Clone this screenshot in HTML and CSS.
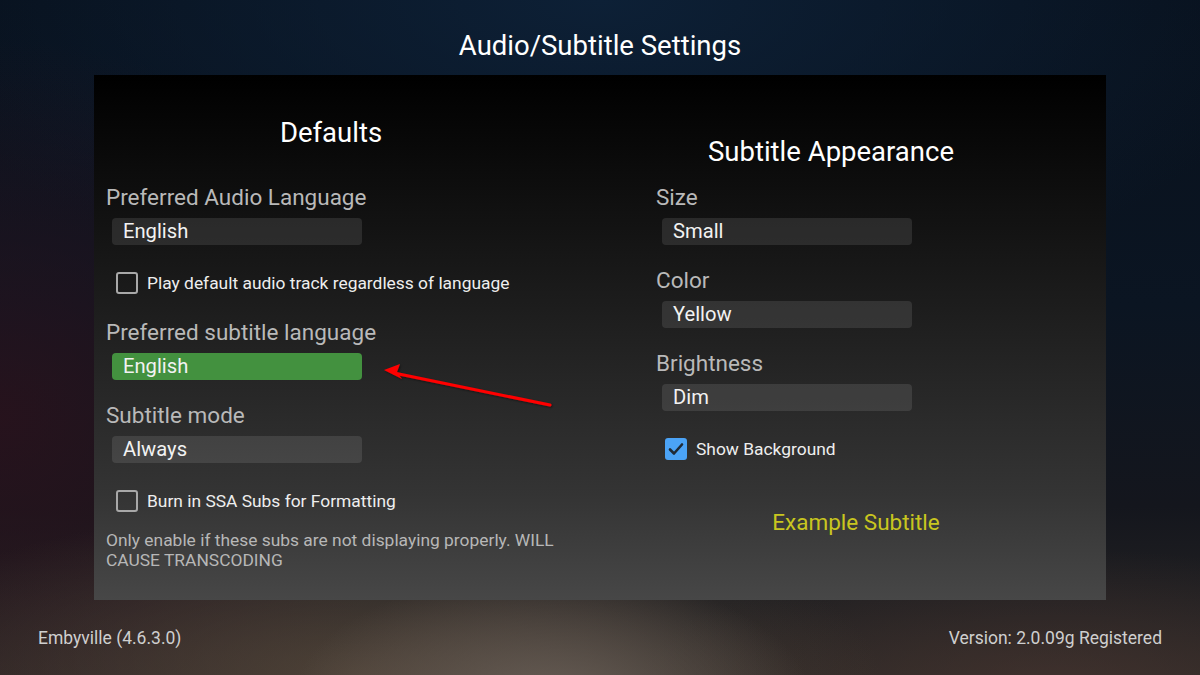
FILE: index.html
```html
<!DOCTYPE html>
<html>
	<head>
		<meta charset="UTF-8">
		<title>Audio/Subtitle Settings</title>
		<link rel="stylesheet" href="styles.css">
	</head>
	<body>
		<div class="screen">
			<h1 class="title">Audio/Subtitle Settings</h1>

			<div class="panel">
				<div class="col col-left">
					<h2 class="heading heading-left">Defaults</h2>

					<div class="label">Preferred Audio Language</div>
					<div class="select">English</div>

					<div class="check check-after-select">
						<span class="box"></span>
						<span>Play default audio track regardless of language</span>
					</div>

					<div class="label label-after-check">Preferred subtitle language</div>
					<div class="select select-focus">English</div>

					<div class="label label-after-select">Subtitle mode</div>
					<div class="select">Always</div>

					<div class="check check-after-select">
						<span class="box"></span>
						<span>Burn in SSA Subs for Formatting</span>
					</div>

					<p class="note">Only enable if these subs are not displaying properly. WILL CAUSE TRANSCODING</p>
				</div>

				<div class="col col-right">
					<h2 class="heading heading-right">Subtitle Appearance</h2>

					<div class="label">Size</div>
					<div class="select">Small</div>

					<div class="label label-after-select">Color</div>
					<div class="select">Yellow</div>

					<div class="label label-after-select">Brightness</div>
					<div class="select">Dim</div>

					<div class="check check-after-select check-right">
						<span class="box box-on">
							<svg width="22" height="22" viewBox="0 0 22 22">
								<path d="M5 11.5 L9 15.5 L17 6.5" fill="none" stroke="#1f2a36" stroke-width="2.6" stroke-linecap="round" stroke-linejoin="round"/>
							</svg>
						</span>
						<span>Show Background</span>
					</div>

					<div class="example">Example Subtitle</div>
				</div>
			</div>

			<div class="footer">
				<span>Embyville (4.6.3.0)</span>
				<span>Version: 2.0.09g Registered</span>
			</div>

			<!-- annotation arrow drawn over the panel -->
			<svg class="arrow" width="1200" height="675" viewBox="0 0 1200 675">
				<defs>
					<filter id="shade" x="-10%" y="-50%" width="120%" height="200%">
						<feDropShadow dx="1" dy="1" stdDeviation="1" flood-color="#000" flood-opacity="0.5"/>
					</filter>
				</defs>
				<g filter="url(#shade)">
					<line x1="550" y1="405" x2="394" y2="373" stroke="#ff0000" stroke-width="3" stroke-linecap="round"/>
					<path d="M384 370 L400 364 L397 372 L402 379 Z" fill="#ff0000"/>
				</g>
			</svg>
		</div>
	</body>
</html>
```

FILE: styles.css
```css
html, body {
	margin: 0;
	padding: 0;
}

body {
	font-family: Roboto, "Liberation Sans", sans-serif;
	color: #f0f0f0;
	background: #0a1422;
}

.screen {
	position: relative;
	width: 1200px;
	height: 675px;
	overflow: hidden;
	display: flex;
	flex-direction: column;
	background:
		radial-gradient(ellipse 260px 130px at 46% 104%, rgba(110, 100, 92, 0.85), rgba(110, 100, 92, 0) 100%),
		radial-gradient(ellipse 520px 170px at 30% 100%, rgba(92, 76, 62, 0.7), rgba(92, 76, 62, 0) 100%),
		radial-gradient(ellipse 420px 140px at 88% 102%, rgba(80, 56, 50, 0.55), rgba(80, 56, 50, 0) 100%),
		radial-gradient(ellipse 420px 380px at 0% 62%, rgba(44, 18, 28, 0.8), rgba(44, 18, 28, 0) 100%),
		radial-gradient(ellipse 700px 320px at 50% 0%, #0d2036, rgba(13, 32, 54, 0) 100%),
		linear-gradient(to bottom, #08111d 0%, #0b1522 45%, #14161d 75%, #2b2826 100%);
}

.title {
	margin: 31px 0 0;
	height: 44px;
	font-size: 27.5px;
	line-height: 30px;
	font-weight: 400;
	text-align: center;
	color: #ffffff;
}

.panel {
	margin: 0 94px;
	height: 525px;
	padding-left: 12px;
	box-sizing: border-box;
	display: grid;
	grid-template-columns: 450px 350px;
	column-gap: 100px;
	background: linear-gradient(to bottom, #000000 0%, #1a1a1a 40%, #343434 80%, #474747 100%);
}

.col {
	display: flex;
	flex-direction: column;
	align-items: flex-start;
}

.heading {
	align-self: stretch;
	margin: 0;
	font-size: 27.5px;
	line-height: 30px;
	font-weight: 400;
	text-align: center;
	color: #ffffff;
}

.heading-left {
	margin-top: 43px;
	margin-bottom: 36px;
}

.heading-right {
	margin-top: 62px;
	margin-bottom: 17px;
}

.label {
	font-size: 22.5px;
	line-height: 26px;
	color: #b9b9b9;
}

.label-after-check {
	margin-top: 24px;
}

.label-after-select {
	margin-top: 22px;
}

.select {
	margin: 8px 0 0 6px;
	width: 250px;
	height: 27px;
	box-sizing: border-box;
	padding-left: 11px;
	border-radius: 4px;
	background: rgba(255, 255, 255, 0.1);
	font-size: 20.2px;
	line-height: 27px;
	color: #f2f2f2;
}

.select-focus {
	background: #43913f;
}

.check {
	display: flex;
	align-items: center;
	gap: 9px;
	margin-left: 10px;
	height: 24px;
	font-size: 17.4px;
	color: #eeeeee;
}

.check-after-select {
	margin-top: 26px;
}

.check-right {
	margin-top: 26px;
	margin-left: 9px;
}

.box {
	width: 22px;
	height: 22px;
	box-sizing: border-box;
	border: 2px solid #a8a8a8;
	border-radius: 3px;
}

.box-on {
	border: none;
	background: #4ba3f6;
}

.box-on svg {
	display: block;
}

.note {
	margin: 17px 0 0;
	font-size: 17.4px;
	line-height: 20px;
	color: #b7b7b7;
}

.example {
	margin-top: 48px;
	align-self: stretch;
	padding-left: 50px;
	text-align: center;
	font-size: 22.5px;
	line-height: 26px;
	color: #c9c61f;
}

.footer {
	display: flex;
	justify-content: space-between;
	padding: 28px 38px 0;
	font-size: 17.5px;
	line-height: 20px;
	color: #cfcfcf;
}

.arrow {
	position: absolute;
	left: 0;
	top: 0;
	pointer-events: none;
}
```
